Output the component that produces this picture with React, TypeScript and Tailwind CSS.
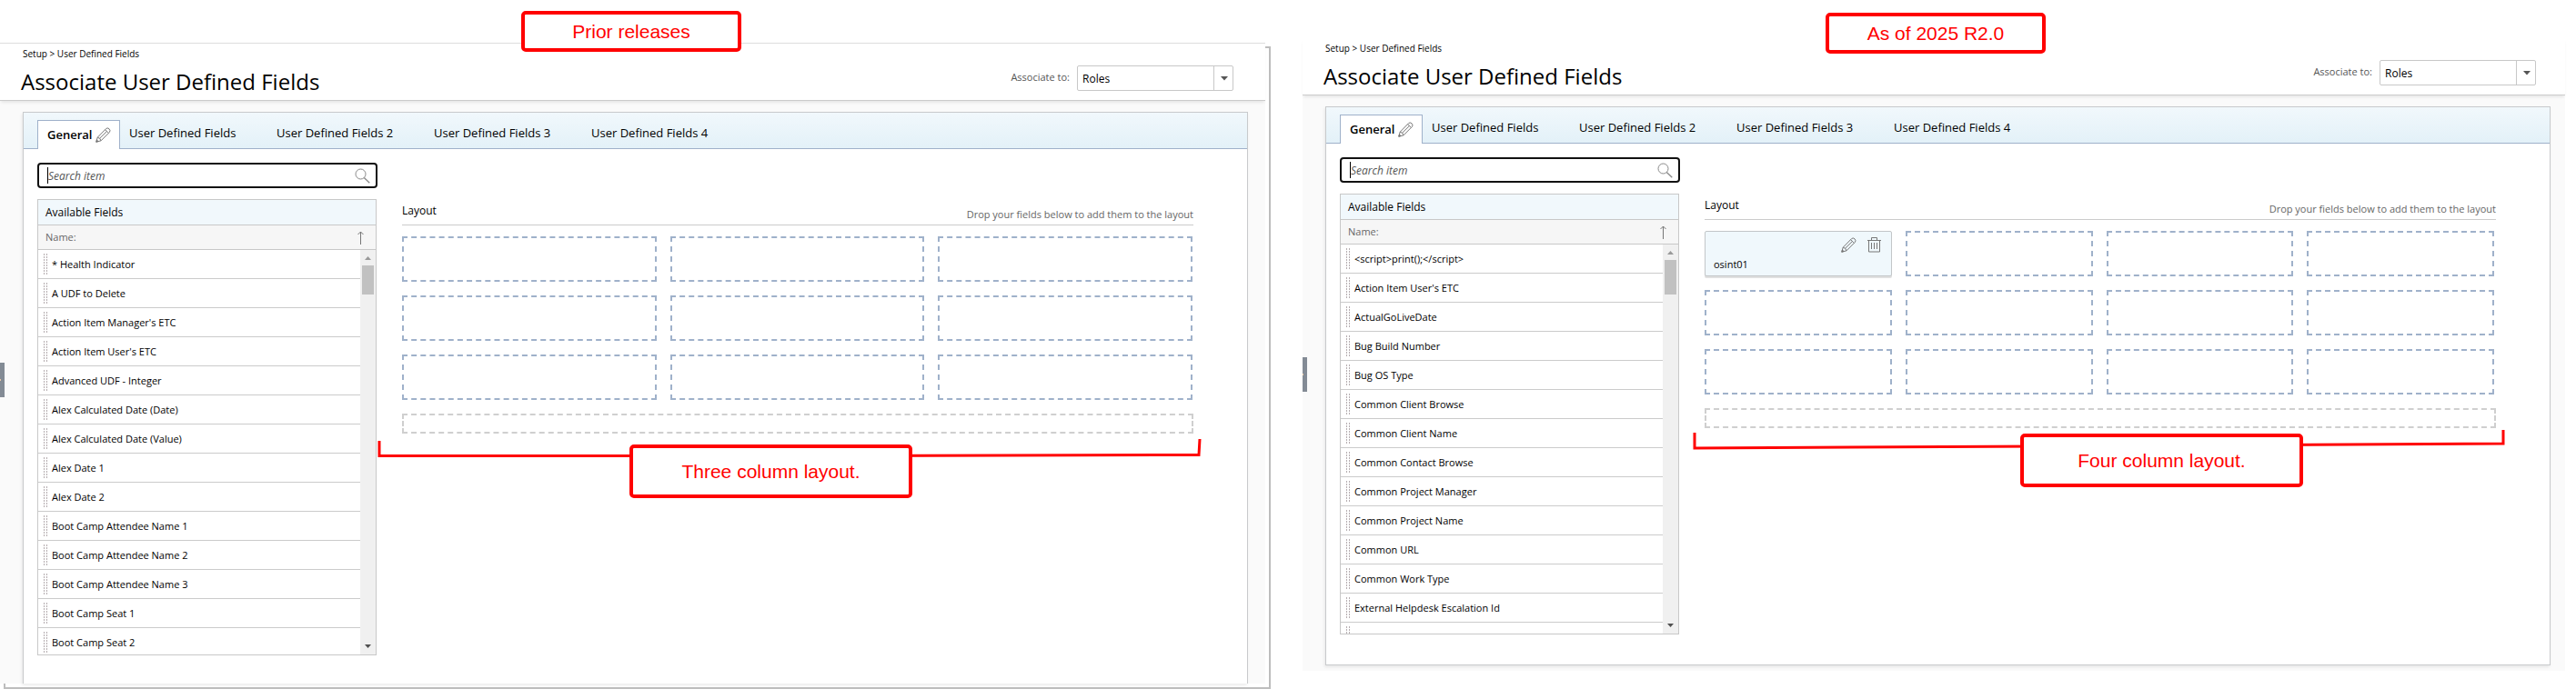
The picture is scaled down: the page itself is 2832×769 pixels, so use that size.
import React from "react";

interface FieldPageProps {
  id: string;
  fields: string[];
  placed: string[];
  slots: number;
  gridClass: string;
  listClass: string;
  thumbClass: string;
  headerClass: string;
  mainClass: string;
  cardClass: string;
  bracket: React.ReactNode;
}

const tabs = ["User Defined Fields", "User Defined Fields 2", "User Defined Fields 3", "User Defined Fields 4"];

const priorFields = [
  "* Health Indicator",
  "A UDF to Delete",
  "Action Item Manager's ETC",
  "Action Item User's ETC",
  "Advanced UDF - Integer",
  "Alex Calculated Date (Date)",
  "Alex Calculated Date (Value)",
  "Alex Date 1",
  "Alex Date 2",
  "Boot Camp Attendee Name 1",
  "Boot Camp Attendee Name 2",
  "Boot Camp Attendee Name 3",
  "Boot Camp Seat 1",
  "Boot Camp Seat 2",
];

const currentFields = [
  "<script>print();</script>",
  "Action Item User's ETC",
  "ActualGoLiveDate",
  "Bug Build Number",
  "Bug OS Type",
  "Common Client Browse",
  "Common Client Name",
  "Common Contact Browse",
  "Common Project Manager",
  "Common Project Name",
  "Common URL",
  "Common Work Type",
  "External Helpdesk Escalation Id",
  "",
];

const PencilIcon = () => (
  <svg width="17" height="17" viewBox="0 0 17 17" fill="none" stroke="#777" strokeWidth="1">
    <path d="M0.8 16.2 L2.2 11.2 L11.6 1.6 Q13.2 0.1 15 1.8 Q16.8 3.7 15.4 5.4 L6 14.8 Z" />
    <path d="M2.2 11.2 Q5.4 11.6 6 14.8 M10.6 2.7 L14.3 6.4 M4.6 12.2 L12.4 4.5" />
    <path d="M0.8 16.2 L1.4 14 L3 15.5 Z" fill="#777" />
  </svg>
);

const TrashIcon = () => (
  <svg width="15" height="17" viewBox="0 0 15 17" fill="none" stroke="#777" strokeWidth="1">
    <path d="M0 3.5 H15 M4.5 3 V0.5 H10.5 V3 M1.5 3.5 V16 H13.5 V3.5 M4.5 6 V13 M7.5 6 V13 M10.5 6 V13" />
  </svg>
);

const SearchIcon = () => (
  <svg width="17" height="17" viewBox="0 0 17 17" fill="none" stroke="#888" strokeWidth="1">
    <circle cx="6.5" cy="6.5" r="5.5" />
    <path d="M10.3 10.5 L16.3 16.3" strokeWidth="1.3" />
  </svg>
);

const SortIcon = () => (
  <svg width="7" height="15" viewBox="0 0 7 15" fill="none" stroke="#777" strokeWidth="1">
    <path d="M3.5 1 V15 M0.5 4 L3.5 1 L6.5 4" />
  </svg>
);

const DragHandle = () => (
  <span className="mr-[5px] flex h-[23px] w-1 justify-between">
    <span className="w-px bg-[repeating-linear-gradient(#b5adb0_0_2px,transparent_2px_3px)]" />
    <span className="w-px bg-[repeating-linear-gradient(#b5adb0_0_2px,transparent_2px_3px)]" />
  </span>
);

const Callout = ({ className, children }: { className: string; children: React.ReactNode }) => (
  <div
    className={`absolute flex items-center justify-center rounded-[5px] border-4 border-[#ff0000] bg-white font-['Liberation_Sans',sans-serif] text-[21px] leading-6 text-[#ff0000] ${className}`}
  >
    {children}
  </div>
);

const FieldPage = ({
  id,
  fields,
  placed,
  slots,
  gridClass,
  listClass,
  thumbClass,
  headerClass,
  mainClass,
  cardClass,
  bracket,
}: FieldPageProps) => (
  <div className="relative bg-[#fafafa]">
    {/* Page header */}
    <header className={`flex h-[63px] justify-between border-b border-[#cbcbcb] bg-white pl-[23px] shadow-[0_3px_3px_-1px_rgba(0,0,0,0.08)] ${headerClass}`}>
      <div>
        <nav className="pt-1 pl-[2px] text-[10px] leading-[14px]">
          <a href="#setup">Setup</a> &gt; <a href="#udf">User Defined Fields</a>
        </nav>
        <h1 className="mt-2 text-[24px] leading-8">Associate User Defined Fields</h1>
      </div>
      <div className="flex items-start gap-2 pt-6">
        <label htmlFor={`${id}-associate`} className="pt-[5px] text-[11px] leading-4 text-[#555]">
          Associate to:
        </label>
        <div className="relative">
          <select
            id={`${id}-associate`}
            className="h-7 w-[172px] appearance-none rounded-[2px] border border-[#c8c8c8] bg-white pt-[2px] pl-[5px] text-[12px]"
          >
            <option>Roles</option>
          </select>
          <span className="pointer-events-none absolute inset-y-0 right-0 flex w-[22px] items-center justify-center border-l border-[#c8c8c8]">
            <svg width="8" height="5" viewBox="0 0 8 5" fill="#555">
              <path d="M0 0 H8 L4 4.5 Z" />
            </svg>
          </span>
        </div>
      </div>
    </header>

    <main className={`pt-3 pl-[25px] ${mainClass}`}>
      <div className={`border border-[#c8cacc] bg-white shadow-[-1px_2px_3px_rgba(0,0,0,0.08)] ${cardClass}`}>
        {/* Tabs */}
        <div className="flex h-10 items-end border-b border-[#9fb1ca] bg-linear-to-b from-[#f1f8fc] to-[#e3f1f8] pl-[15px] text-[13px]">
          <button className="-mb-px flex h-8 w-[91px] items-center gap-1 border border-b-0 border-[#9fb1ca] bg-white pl-[10px] font-semibold">
            General
            <PencilIcon />
          </button>
          {tabs.map((tab, i) => (
            <button key={tab} className={`h-8 pl-[10px] text-left ${i === 0 ? "w-[162px]" : "w-[173px]"}`}>
              {tab}
            </button>
          ))}
        </div>

        <div className="flex pt-[15px] pr-[59px] pl-[15px]">
          {/* Available fields */}
          <section className="w-[374px] shrink-0">
            <div className="flex h-7 items-center rounded-[4px] border-2 border-[#111] bg-white pr-[6px] pl-[9px]">
              <span className="h-[18px] w-px bg-black" />
              <input
                aria-label="Search item"
                placeholder="Search item"
                className="min-w-0 flex-1 pt-[2px] text-[12px] italic outline-none placeholder:text-[#555]"
              />
              <SearchIcon />
            </div>
            <div className="mt-3 mr-px border border-[#c8c8c8]">
              <h2 className="h-7 border-b border-[#c8c8c8] bg-[#f1f8fc] pl-2 text-[12px] leading-7">Available Fields</h2>
              <div className="flex h-[27px] items-center justify-between border-b border-[#c8c8c8] bg-[#f6f6f6] pr-[13px] pl-2 text-[11px] text-[#666]">
                <span>Name:</span>
                <SortIcon />
              </div>
              <div className={`flex ${listClass}`}>
                <ul className="flex-1 overflow-hidden">
                  {fields.map((field) => (
                    <li key={field} className="flex h-8 items-center border-b border-[#cbcbcb] pl-[6px] text-[11px]">
                      <DragHandle />
                      <span className="pt-[2px]">{field}</span>
                    </li>
                  ))}
                </ul>
                <div className="flex w-[17px] flex-col items-center bg-[#f0f0f0] py-[7px]">
                  <svg width="7" height="4" viewBox="0 0 7 4" fill="#999">
                    <path d="M0 4 H7 L3.5 0 Z" />
                  </svg>
                  <div className={`mt-[6px] w-[13px] bg-[#c1c1c1] ${thumbClass}`} />
                  <svg className="mt-auto" width="7" height="4" viewBox="0 0 7 4" fill="#505050">
                    <path d="M0 0 H7 L3.5 4 Z" />
                  </svg>
                </div>
              </div>
            </div>
          </section>

          {/* Layout */}
          <section className="relative ml-[27px] min-w-0 flex-1 pt-[45px]">
            <div className="flex h-6 justify-between border-b border-[#cbcbcb]">
              <h2 className="text-[12px] leading-4">Layout</h2>
              <p className="pt-1 text-[11px] leading-4 text-[#666]">Drop your fields below to add them to the layout</p>
            </div>
            <div className={`mt-3 grid gap-[15px] ${gridClass}`}>
              {placed.map((name) => (
                <div key={name} className="flex h-[50px] flex-col rounded-[2px] border border-[#c3c6c8] bg-[#f0f8fc] pt-[6px] pr-[11px] pl-[9px] shadow-[0_2px_0_#e0e0e0]">
                  <div className="flex justify-end gap-3">
                    <button aria-label="Edit">
                      <PencilIcon />
                    </button>
                    <button aria-label="Delete">
                      <TrashIcon />
                    </button>
                  </div>
                  <span className="mt-[5px] text-[11px] leading-4">{name}</span>
                </div>
              ))}
              {Array.from({ length: slots }, (_, i) => (
                <div key={i} className="h-[50px] border-2 border-dashed border-[#9fb1ca]" />
              ))}
            </div>
            <div className="mt-[15px] h-[22px] border-2 border-dashed border-[#cfcfcf]" />
            {bracket}
          </section>
        </div>
      </div>
    </main>

    <button aria-label="Expand menu" className="absolute top-[351px] left-0 flex h-[38px] w-[5px] items-center bg-[#838b95]">
      <span className="h-[2px] w-px bg-[#e9c9a6]" />
    </button>
  </div>
);

export default function App() {
  return (
    <div className="grid grid-cols-[1397fr_35px_1388fr_12px] items-start bg-white pb-[11px] font-['Open_Sans',sans-serif] text-black">
      <div className="relative pt-[47px]">
        <div className="mr-[6px] border-t border-[#dedede]">
          <FieldPage
            id="prior"
            fields={priorFields}
            placed={[]}
            slots={9}
            gridClass="grid-cols-3 pr-px"
            listClass="h-[445px]"
            thumbClass="h-8"
            headerClass="pr-[35px]"
            mainClass="pr-[19px]"
            cardClass="border-b-0 pb-[31px]"
            bracket={
              <>
                <svg
                  className="absolute top-[304px] -left-[27px] h-5 w-[calc(100%+36px)]"
                  viewBox="0 0 906 20"
                  preserveAspectRatio="none"
                  fill="none"
                  stroke="#ff0000"
                  strokeWidth="3"
                >
                  <path d="M2 2 V18.5 H500 L903 17.5 L904 0" />
                </svg>
                <Callout className="top-[310px] left-[250px] h-[59px] w-[311px]">Three column layout.</Callout>
              </>
            }
          />
        </div>
        {/* Snapshot frame */}
        <div className="absolute top-[51px] right-0 bottom-0 w-[6px] border-t-2 border-r-2 border-[#bdbdbd]" />
        <div className="ml-1 h-[6px] border-b-2 border-l-2 border-[#bdbdbd]" />
        <Callout className="top-3 left-[573px] h-[45px] w-[242px]">Prior releases</Callout>
      </div>

      <div />

      <div className="relative pt-[42px]">
        <FieldPage
          id="current"
          fields={currentFields}
          placed={["osint01"]}
          slots={11}
          gridClass="grid-cols-4 pr-[2px]"
          listClass="h-[428px]"
          thumbClass="h-[38px]"
          headerClass="pr-8"
          mainClass="pr-4 pb-[6px]"
          cardClass="pb-[33px]"
          bracket={
            <>
              <svg
                className="absolute top-[300px] -left-[13px] h-6 w-[calc(100%+23px)]"
                viewBox="0 0 893 24"
                preserveAspectRatio="none"
                fill="none"
                stroke="#ff0000"
                strokeWidth="3"
              >
                <path d="M2 3 V20 L380 18 L891 15 V0" />
              </svg>
              <Callout className="top-[304px] left-[347px] h-[59px] w-[311px]">Four column layout.</Callout>
            </>
          }
        />
        <Callout className="top-[14px] left-[575px] h-[45px] w-[242px]">As of 2025 R2.0</Callout>
      </div>
    </div>
  );
}
